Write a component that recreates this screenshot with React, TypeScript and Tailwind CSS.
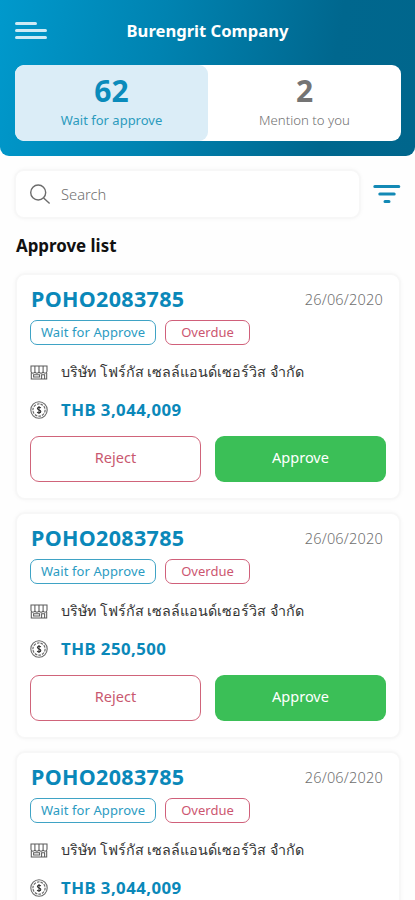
const orders = [
  { id: "POHO2083785", date: "26/06/2020", amount: "THB 3,044,009", actions: true },
  { id: "POHO2083785", date: "26/06/2020", amount: "THB 250,500", actions: true },
  { id: "POHO2083785", date: "26/06/2020", amount: "THB 3,044,009", actions: false },
];

function StoreIcon() {
  return (
    <svg className="h-[15px] w-[18px]" viewBox="0 0 18 15" fill="none" stroke="#5c5c5c" strokeWidth="1.05">
      <path d="M1 1h16v5.2c0 2.6-3.9 2.6-3.9 0 0 2.6-4.1 2.6-4.1 0 0 2.6-4.1 2.6-4.1 0 0 2.6-3.9 2.6-3.9 0z" />
      <path d="M4.9 1v5.2M9 1v5.2M13.1 1v5.2M1.3 8v6h15.4V8M3.6 9.8h6v2.2h-6zM11.6 14V9.8h3V14" />
    </svg>
  );
}

function CoinIcon() {
  return (
    <svg className="h-[18px] w-[18px]" viewBox="0 0 18 18" fill="none" stroke="#6b6b6b">
      <circle cx="9" cy="9" r="8.2" strokeWidth="1.1" />
      <circle cx="9" cy="9" r="6.1" strokeWidth="1.2" strokeDasharray="2.6 1.1" />
      <path d="M10.8 7C10.3 6 7.4 5.9 7.4 7.6c0 1.6 3.4 1.1 3.4 2.8 0 1.8-3 1.7-3.6.5M9 5.1v7.8" stroke="#333333" strokeWidth="1.1" />
    </svg>
  );
}

function OrderCard({ id, date, amount, actions }: { id: string; date: string; amount: string; actions: boolean }) {
  return (
    <article className="h-[227px] w-[386px] shrink-0 rounded-[10px] border-2 border-[#f7f7f7] bg-white px-[13px] pt-[9px] shadow-[0_0_4px_rgba(0,0,0,0.035)]">
      <div className="flex h-[30px] items-center justify-between pl-[1px] pr-[3px]">
        <h3 className="text-[21.5px] font-bold leading-[30px] tracking-[0.32px] text-[#0a88b9]">{id}</h3>
        <time className="text-[14.5px] font-light leading-[30px] tracking-[0.2px] text-[#707070]">{date}</time>
      </div>
      <div className="mt-[6px] flex gap-[9px]">
        <span className="flex h-[25px] w-[126px] items-center justify-center rounded-[7px] border border-[#3fa3c5] text-[13px] tracking-[0.1px] text-[#2b9bc2]">Wait for Approve</span>
        <span className="flex h-[25px] w-[85px] items-center justify-center rounded-[7px] border border-[#d0607a] text-[13px] text-[#cc5670]">Overdue</span>
      </div>
      <div className="mt-[14px] flex h-[26px] items-center">
        <StoreIcon />
        <span className="ml-[13px] whitespace-nowrap text-[14.3px] leading-[26px] text-[#333333]">บริษัท โฟร์กัส เซลล์แอนด์เซอร์วิส จำกัด</span>
      </div>
      <div className="mt-[12px] flex h-[26px] items-center">
        <CoinIcon />
        <span className="ml-[13px] text-[16.8px] font-bold leading-[26px] tracking-[0.45px] text-[#0a88b9]">{amount}</span>
      </div>
      {actions && (
        <div className="mt-[13px] flex gap-[14px]">
          <button className="h-[46px] w-[171px] rounded-[9px] border border-[#d0647a] pb-[2px] text-[14.5px] text-[#c9586f]">Reject</button>
          <button className="h-[46px] w-[171px] rounded-[9px] bg-[#3bbf57] pb-[2px] text-[14.5px] text-white">Approve</button>
        </div>
      )}
    </article>
  );
}

export default function App() {
  return (
    <main className="h-[900px] w-[415px] overflow-hidden bg-[#fefefe] font-['Noto_Sans','Open_Sans',sans-serif]">
      <header className="h-[156px] rounded-b-[9px] bg-[linear-gradient(100deg,#0099cc_0%,#0083b1_38%,#00678e_78%,#00668c_100%)] px-[15px]">
        <div className="relative flex h-[65px] items-center justify-center">
          <button aria-label="Menu" className="absolute left-0 top-[22px] flex flex-col gap-[4px]">
            <span className="h-[3px] w-[22px] rounded-full bg-[#cdeaf5]" />
            <span className="h-[3px] w-[32px] rounded-full bg-[#cdeaf5]" />
            <span className="h-[3px] w-[32px] rounded-full bg-[#cdeaf5]" />
          </button>
          <h1 className="pb-[3px] text-[16.6px] font-bold text-white">Burengrit Company</h1>
        </div>
        <div className="flex h-[76px] w-[386px] overflow-hidden rounded-[9px] bg-white">
          <div className="flex w-[193px] flex-col items-center rounded-[9px] bg-[#dbedf7] pt-[8px]">
            <span className="text-[30px] font-bold leading-[36px] text-[#0a8bbb]">62</span>
            <span className="text-[13px] leading-[22px] text-[#2b9bbd]">Wait for approve</span>
          </div>
          <div className="flex w-[193px] flex-col items-center pt-[8px]">
            <span className="text-[30px] font-bold leading-[36px] text-[#747474]">2</span>
            <span className="text-[13.2px] font-light leading-[22px] text-[#707070]">Mention to you</span>
          </div>
        </div>
      </header>
      <div className="flex items-center px-[14px] pt-[13px]">
        <div className="flex h-[50px] w-[347px] items-center rounded-[10px] border-2 border-[#f7f7f7] bg-white pl-[13px] shadow-[0_0_4px_rgba(0,0,0,0.035)]">
          <svg className="h-[22px] w-[22px]" viewBox="0 0 22 22" fill="none" stroke="#6c6c6c" strokeWidth="1.4">
            <circle cx="9.2" cy="9.5" r="7.5" />
            <path d="m14.6 15 6 5.5" />
          </svg>
          <span className="ml-[10px] text-[14.7px] font-light text-[#707070]">Search</span>
        </div>
        <svg className="ml-[12px] h-[20px] w-[28px]" viewBox="0 0 28 20" fill="none" stroke="#1389b5" strokeWidth="3" strokeLinecap="round">
          <path d="M1.8 2.5h24M6.8 10h14.4M12 17.5h4" />
        </svg>
      </div>
      <h2 className="ml-[16px] mt-[14px] h-[26px] text-[16.9px] font-bold leading-[26px] text-[#111111]">Approve list</h2>
      <section className="ml-[15px] mt-[14px] flex flex-col gap-[12px]">
        {orders.map((order, index) => <OrderCard key={index} {...order} />)}
      </section>
    </main>
  );
}
